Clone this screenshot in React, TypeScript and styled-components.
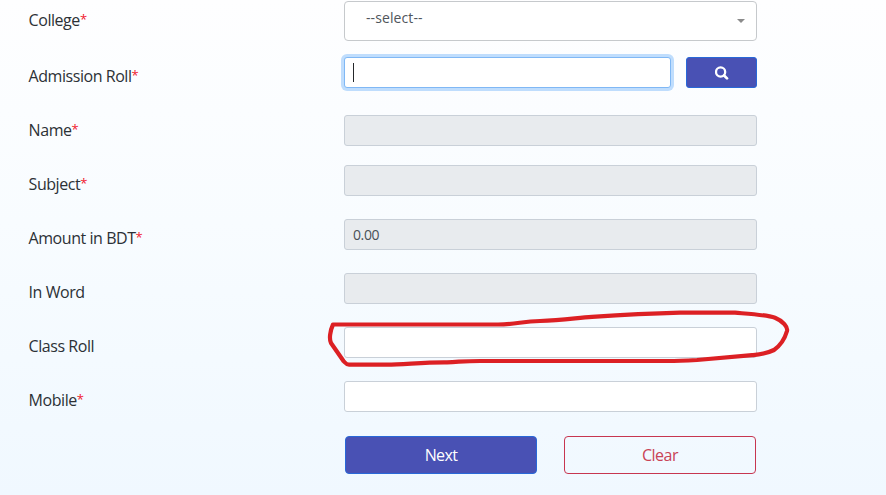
import React from "react";
import styled, { createGlobalStyle, css } from "styled-components";

const GlobalStyle = createGlobalStyle`
  * { box-sizing: border-box; }
  body {
    margin: 0;
    background: #f1f8ff;
    font-family: "Segoe UI", "Open Sans", "Noto Sans", sans-serif;
    color: #2c3136;
  }
`;

const Page = styled.main`
  position: relative;
  width: 886px;
  height: 495px;
  overflow: hidden;
  padding: 1px 0 0 28px;
  background: linear-gradient(180deg, #fefeff 0%, #f8fcff 45%, #f0f8ff 100%);
`;

const Row = styled.div<{ $height?: number }>`
  display: grid;
  grid-template-columns: 316px 413px;
  align-items: start;
  height: ${({ $height = 54 }) => $height}px;
`;

const Label = styled.label<{ $top?: number }>`
  padding-top: ${({ $top = 7 }) => $top}px;
  padding-left: 0.6px;
  font-size: 16px;
  line-height: 24px;
  letter-spacing: -0.45px;
  white-space: nowrap;
`;

const Required = styled.span`
  color: #f0182d;
  font-size: 13px;
  line-height: 1;
  vertical-align: 2px;
`;

const fieldBox = css`
  border: 1px solid #c9d0d8;
  border-radius: 3px;
  background: #fff;
`;

const Select = styled.div`
  ${fieldBox}
  display: flex;
  align-items: center;
  justify-content: space-between;
  height: 40px;
  padding: 0 11px 0 21px;
  border-color: #c6c9cc;
  border-radius: 4px;
  color: #50565c;
  font-size: 14px;
`;

const SelectText = styled.span`
  padding-bottom: 7px;
  letter-spacing: 0.1px;
`;

const Arrow = styled.span`
  width: 0;
  height: 0;
  border: 4px solid transparent;
  border-top-color: #8b8b8b;
  border-bottom: 0;
`;

const Field = styled.div<{ $disabled?: boolean; $focused?: boolean }>`
  ${fieldBox}
  display: flex;
  align-items: center;
  height: 31px;
  padding: 0 8px;
  color: #495057;
  font-size: 14px;
  letter-spacing: -0.4px;
  ${({ $disabled }) => $disabled && css`background: #e8ebee;`}
  ${({ $focused }) => $focused && css`
    border-color: #80b8f5;
    box-shadow: 0 0 0 3px #bfddfd;
  `}
`;

const Caret = styled.span`
  width: 1px;
  height: 19px;
  background: #25282b;
`;

const SearchGroup = styled.div`
  display: grid;
  grid-template-columns: 327px 71px;
  gap: 15px;
`;

const Button = styled.button<{ $outline?: boolean }>`
  display: flex;
  align-items: center;
  justify-content: center;
  height: 38px;
  padding: 0 0 1px;
  border: 1px solid ${({ $outline }) => ($outline ? "#c73650" : "#2868d8")};
  border-radius: 4px;
  background: ${({ $outline }) => ($outline ? "transparent" : "#4951b4")};
  color: ${({ $outline }) => ($outline ? "#c94356" : "#fff")};
  font-family: inherit;
  font-size: 16px;
  letter-spacing: ${({ $outline }) => ($outline ? "-0.5px" : "-0.6px")};
`;

const SearchButton = styled(Button)`
  height: 31px;
  padding: 0;
  border-radius: 3px;
`;

const Actions = styled.div`
  display: grid;
  grid-template-columns: 192px 192px;
  gap: 27px;
  margin-left: 317px;
`;

const Markup = styled.svg`
  position: absolute;
  inset: 0;
  pointer-events: none;
`;

interface FieldRow {
  name: string;
  required?: boolean;
  disabled?: boolean;
  value?: string;
  height?: number;
  labelTop?: number;
}

const rows: FieldRow[] = [
  { name: "Name", required: true, disabled: true, height: 50, labelTop: 3 },
  { name: "Subject", required: true, disabled: true },
  { name: "Amount in BDT", required: true, disabled: true, value: "0.00" },
  { name: "In Word", disabled: true },
  { name: "Class Roll" },
  { name: "Mobile", required: true, height: 55 },
];

export default function App() {
  return (
    <>
      <GlobalStyle />
      <Page>
        <Row $height={56}>
          <Label>College<Required>*</Required></Label>
          <Select><SelectText>--select--</SelectText><Arrow /></Select>
        </Row>
        <Row $height={58}>
          <Label>Admission Roll<Required>*</Required></Label>
          <SearchGroup>
            <Field $focused><Caret /></Field>
            <SearchButton aria-label="Search">
              <svg width="14" height="14" viewBox="0 0 14 14" fill="none" stroke="#fff">
                <circle cx="5.6" cy="6" r="4.6" strokeWidth="2.3" />
                <path d="M9.1 9.5L12 12.4" strokeWidth="2.7" strokeLinecap="round" />
              </svg>
            </SearchButton>
          </SearchGroup>
        </Row>
        {rows.map((row) => (
          <Row key={row.name} $height={row.height}>
            <Label $top={row.labelTop}>
              {row.name}{row.required && <Required>*</Required>}
            </Label>
            <Field $disabled={row.disabled}>{row.value}</Field>
          </Row>
        ))}
        <Actions>
          <Button>Next</Button>
          <Button $outline>Clear</Button>
        </Actions>
        <Markup width="886" height="495" viewBox="0 0 886 495" fill="none" aria-hidden="true">
          <path
            d="M333 324.5H498C516 324.3 522 321.5 540 321C562 320 576 318 592 316.8C620 315 648 313.5 680 312.7H735C751 314 766 314.8 775 317.7C783 321 788 327 787 331C785 338 781 345 774 350C766 354 759 354.5 752 355.2C733 356.7 715 358.6 697 360C686 360.6 678 361 668 361H480C463 361 459 362 447 362.3C424 362 404 364.6 387 364.6H349C346 364.6 345 362.5 343.5 361L331 343C329 339 330 331 333 324.5Z"
            stroke="#dc2024" strokeWidth="4.2" strokeLinejoin="round"
          />
        </Markup>
      </Page>
    </>
  );
}
